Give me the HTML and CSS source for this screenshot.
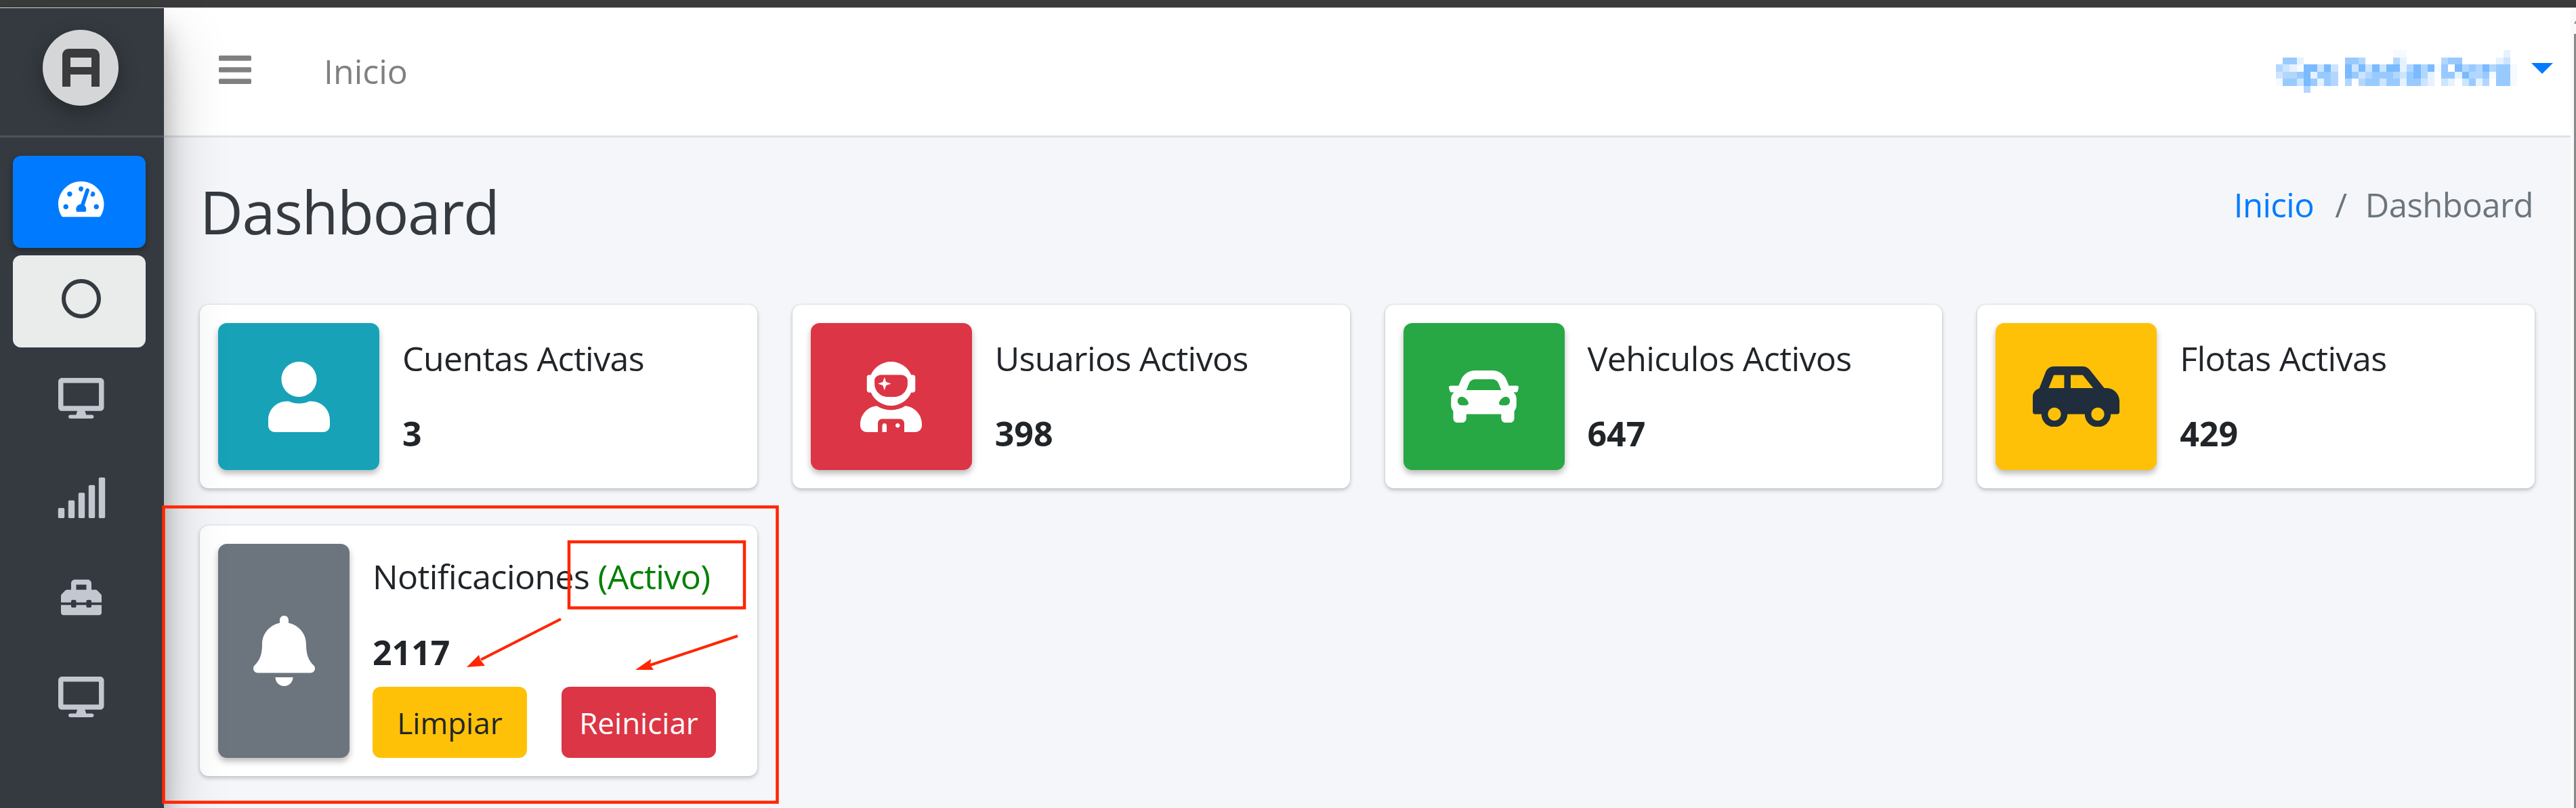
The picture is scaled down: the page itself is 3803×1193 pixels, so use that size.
FILE: index.html
```html
<!DOCTYPE html>
<html>
<head>
    <title>Dashboard</title>
    <link rel="stylesheet" href="styles.css">
</head>
<body>
    <div class="topbar"></div>
    <div class="shell">
        <aside class="sidebar">
            <div class="brand">
                <div class="logo">
                    <svg class="logo-mark" viewBox="0 0 55 56"><path fill-rule="evenodd" d="M10 0h35c6 0 10 4 10 10v46H43V38H12v18H0V10C0 4 4 0 10 0zm2 13v14h31V13z"/></svg>
                </div>
            </div>
            <nav class="side-nav">
                <a class="side-item active">
                    <svg class="ico" viewBox="0 0 576 512"><path d="M288 32C128.94 32 0 160.94 0 320c0 52.8 14.25 102.26 39.06 144.8 5.61 9.62 16.3 15.2 27.44 15.2h443c11.14 0 21.83-5.58 27.44-15.2C561.75 422.26 576 372.8 576 320c0-159.06-128.94-288-288-288zm0 64c14.71 0 26.58 10.13 30.32 23.65-1.11 2.26-2.64 4.23-3.45 6.67l-9.22 27.67c-5.13 3.49-10.97 6.01-17.64 6.01-17.67 0-32-14.33-32-32S270.33 96 288 96zM96 384c-17.67 0-32-14.33-32-32s14.33-32 32-32 32 14.33 32 32-14.33 32-32 32zm48-160c-17.67 0-32-14.33-32-32s14.33-32 32-32 32 14.33 32 32-14.33 32-32 32zm246.77-72.41l-61.33 184C343.13 347.33 352 364.54 352 384c0 11.72-3.38 22.55-8.88 32H232.88c-5.5-9.45-8.88-20.28-8.88-32 0-33.94 26.5-61.43 59.9-63.59l61.34-184.01c4.17-12.56 17.73-19.45 30.36-15.17 12.57 4.19 19.35 17.77 15.17 30.36zm14.66 57.2l15.52-46.55c3.47-1.29 7.13-2.23 11.05-2.23 17.67 0 32 14.33 32 32s-14.33 32-32 32c-11.38-.01-20.89-6.28-26.57-15.22zM480 384c-17.67 0-32-14.33-32-32s14.33-32 32-32 32 14.33 32 32-14.33 32-32 32z"/></svg>
                </a>
                <a class="side-item selected">
                    <svg class="ico-circle" viewBox="0 0 58 58"><circle cx="29" cy="29" r="26" fill="none" stroke="#343a40" stroke-width="6"/></svg>
                </a>
                <a class="side-item">
                    <svg class="ico" viewBox="0 0 576 512"><path d="M528 0H48C21.5 0 0 21.5 0 48v320c0 26.5 21.5 48 48 48h192l-16 48h-72c-13.3 0-24 10.7-24 24s10.7 24 24 24h272c13.3 0 24-10.7 24-24s-10.7-24-24-24h-72l-16-48h192c26.5 0 48-21.5 48-48V48c0-26.5-21.5-48-48-48zm-16 352H64V64h448v288z"/></svg>
                </a>
                <a class="side-item">
                    <svg class="ico" viewBox="0 0 640 512"><path d="M216 288h-48c-8.84 0-16 7.16-16 16v192c0 8.84 7.16 16 16 16h48c8.84 0 16-7.16 16-16V304c0-8.84-7.16-16-16-16zM88 384H40c-8.84 0-16 7.16-16 16v96c0 8.84 7.16 16 16 16h48c8.84 0 16-7.16 16-16v-96c0-8.84-7.16-16-16-16zm256-192h-48c-8.84 0-16 7.16-16 16v288c0 8.84 7.16 16 16 16h48c8.84 0 16-7.16 16-16V208c0-8.84-7.16-16-16-16zm128-96h-48c-8.84 0-16 7.16-16 16v384c0 8.84 7.16 16 16 16h48c8.84 0 16-7.16 16-16V112c0-8.84-7.16-16-16-16zM600 0h-48c-8.84 0-16 7.16-16 16v480c0 8.84 7.16 16 16 16h48c8.84 0 16-7.16 16-16V16c0-8.84-7.16-16-16-16z"/></svg>
                </a>
                <a class="side-item">
                    <svg class="ico" viewBox="0 0 512 512"><path d="M502.63 214.63l-45.25-45.25c-6-6-14.14-9.37-22.63-9.37H384V80c0-26.51-21.49-48-48-48H176c-26.51 0-48 21.49-48 48v80H77.25c-8.49 0-16.62 3.37-22.63 9.37L9.37 214.63c-6 6-9.37 14.14-9.37 22.63V320h128v-16c0-8.84 7.16-16 16-16h32c8.84 0 16 7.16 16 16v16h128v-16c0-8.84 7.16-16 16-16h32c8.84 0 16 7.16 16 16v16h128v-82.75c0-8.48-3.37-16.62-9.37-22.62zM320 160H192V96h128v64zm64 208c0 8.84-7.16 16-16 16h-32c-8.84 0-16-7.16-16-16v-16H192v16c0 8.84-7.16 16-16 16h-32c-8.84 0-16-7.16-16-16v-16H0v96c0 17.67 14.33 32 32 32h448c17.67 0 32-14.33 32-32v-96H384v16z"/></svg>
                </a>
                <a class="side-item">
                    <svg class="ico" viewBox="0 0 576 512"><path d="M528 0H48C21.5 0 0 21.5 0 48v320c0 26.5 21.5 48 48 48h192l-16 48h-72c-13.3 0-24 10.7-24 24s10.7 24 24 24h272c13.3 0 24-10.7 24-24s-10.7-24-24-24h-72l-16-48h192c26.5 0 48-21.5 48-48V48c0-26.5-21.5-48-48-48zm-16 352H64V64h448v288z"/></svg>
                </a>
            </nav>
        </aside>

        <div class="wrapper">
            <header class="navbar">
                <svg class="bars" viewBox="0 60 448 392"><path d="M16 132h416c8.837 0 16-7.163 16-16V76c0-8.837-7.163-16-16-16H16C7.163 60 0 67.163 0 76v40c0 8.837 7.163 16 16 16zm0 160h416c8.837 0 16-7.163 16-16v-40c0-8.837-7.163-16-16-16H16c-8.837 0-16 7.163-16 16v40c0 8.837 7.163 16 16 16zm0 160h416c8.837 0 16-7.163 16-16v-40c0-8.837-7.163-16-16-16H16c-8.837 0-16 7.163-16 16v40c0 8.837 7.163 16 16 16z"/></svg>
                <a class="nav-link">Inicio</a>
                <div class="user-menu">
                    <svg class="blurred-name" viewBox="0 0 35 6" preserveAspectRatio="none" shape-rendering="crispEdges">
                        <path fill-opacity=".04" d="M17 0h2v1h-2zM3 2h1v1H3zM23 2h1v1h-1zM34 2h1v3h-1zM31 3h1v1h-1zM0 4h1v1H0z"/>
                        <path fill-opacity=".1" d="M33 0h1v1h-1zM3 1h1v1H3zM18 1h1v2h-1zM32 1h1v1h-1zM2 2h1v1H2zM5 3h1v1H5zM22 3h1v2h-1zM26 3h1v1h-1zM6 4h1v1H6zM18 4h1v1h-1zM25 4h1v1h-1zM29 4h1v1h-1z"/>
                        <path fill-opacity=".2" d="M33 1h1v1h-1zM1 2h1v1H1zM6 2h1v1H6zM8 2h1v1H8zM11 2h1v1h-1zM13 2h1v1h-1zM15 2h1v1h-1zM0 3h1v1H0zM12 3h1v1h-1zM18 3h1v1h-1zM3 4h1v1H3zM15 4h1v1h-1zM21 4h1v1h-1zM24 4h1v1h-1zM27 4h1v1h-1z"/>
                        <path fill-opacity=".3" d="M12 1h1v1h-1zM17 1h1v1h-1zM24 1h1v1h-1zM0 2h1v1H0zM19 2h1v1h-1zM21 2h1v2h-1zM27 2h1v1h-1zM29 2h1v2h-1zM31 2h1v1h-1zM1 3h2v1H1zM8 3h1v2H8zM13 3h1v1h-1zM17 3h1v1h-1zM28 3h1v1h-1zM10 4h1v1h-1zM12 4h1v1h-1zM30 4h1v1h-1zM4 5h1v1H4z"/>
                        <path fill-opacity=".4" d="M1 1h2v1H1zM10 1h2v1h-2zM25 1h2v1h-2zM24 2h1v1h-1zM28 2h1v1h-1zM32 2h2v3h-2zM3 3h1v1H3zM6 3h2v1H6zM11 3h1v1h-1zM14 3h3v1h-3zM19 3h1v1h-1zM24 3h2v1h-2zM30 3h1v1h-1zM1 4h2v1H1zM5 4h1v1H5zM7 4h1v1H7zM13 4h2v1h-2zM16 4h2v1h-2zM19 4h2v1h-2zM28 4h1v1h-1z"/>
                        <path fill-opacity=".52" d="M4 2h2v1H4zM7 2h1v1H7zM10 2h1v2h-1zM12 2h1v1h-1zM14 2h1v1h-1zM16 2h2v1h-2zM20 2h1v2h-1zM22 2h1v1h-1zM26 2h1v1h-1zM30 2h1v1h-1zM4 3h1v2H4zM27 3h1v1h-1z"/>
                    </svg>
                    <span class="caret"></span>
                </div>
            </header>

            <main class="content">
                <div class="content-head">
                    <h1>Dashboard</h1>
                    <ol class="breadcrumb">
                        <li><a>Inicio</a></li>
                        <li class="sep">/</li>
                        <li class="current">Dashboard</li>
                    </ol>
                </div>

                <div class="boxes">
                    <div class="info-box">
                        <span class="box-icon bg-info">
                            <svg class="icon-lg" viewBox="0 0 448 512"><path d="M224 256c70.7 0 128-57.3 128-128S294.7 0 224 0 96 57.3 96 128s57.3 128 128 128zm89.6 32h-16.7c-22.2 10.2-46.9 16-72.9 16s-50.6-5.8-72.9-16h-16.7C60.2 288 0 348.2 0 422.4V464c0 26.5 21.5 48 48 48h352c26.5 0 48-21.5 48-48v-41.6c0-74.2-60.2-134.4-134.4-134.4z"/></svg>
                        </span>
                        <div class="box-text">
                            <span class="box-title">Cuentas Activas</span>
                            <span class="box-number">3</span>
                        </div>
                    </div>
                    <div class="info-box">
                        <span class="box-icon bg-danger">
                            <svg class="icon-lg" viewBox="0 0 448 512"><path d="M64 224h13.5c24.7 56.5 80.9 96 146.5 96s121.8-39.5 146.5-96H384c8.8 0 16-7.2 16-16v-96c0-8.8-7.2-16-16-16h-13.5C345.8 39.5 289.6 0 224 0S102.2 39.5 77.5 96H64c-8.8 0-16 7.2-16 16v96c0 8.8 7.2 16 16 16zm40-88c0-22.1 21.5-40 48-40h144c26.5 0 48 17.9 48 40v24c0 53-43 96-96 96h-48c-53 0-96-43-96-96v-24zm72 72l12-36 36-12-36-12-12-36-12 36-36 12 36 12 12 36zm151.6 113.4C297.7 340.7 262.2 352 224 352s-73.7-11.3-103.6-30.6C52.9 328.5 0 385 0 454.4v9.6c0 26.5 21.5 48 48 48h80v-64c0-17.7 14.3-32 32-32h128c17.7 0 32 14.3 32 32v64h80c26.5 0 48-21.5 48-48v-9.6c0-69.4-52.9-125.9-120.4-133zM272 448c-8.8 0-16 7.2-16 16s7.2 16 16 16 16-7.2 16-16-7.2-16-16-16zm-96 0c-8.8 0-16 7.2-16 16v48h32v-48c0-8.8-7.2-16-16-16z"/></svg>
                        </span>
                        <div class="box-text">
                            <span class="box-title">Usuarios Activos</span>
                            <span class="box-number">398</span>
                        </div>
                    </div>
                    <div class="info-box">
                        <span class="box-icon bg-success">
                            <svg class="icon-car" viewBox="0 64 512 384"><path d="M499.99 176h-59.87l-16.64-41.6C406.38 91.63 365.57 64 319.5 64h-127c-46.06 0-86.88 27.63-103.99 70.4L71.87 176H12.01C4.2 176-1.53 183.34.37 190.91l6 24C7.7 220.25 12.5 224 18.01 224h20.07C24.65 235.73 16 252.78 16 272v48c0 16.12 6.16 30.67 16 41.93V416c0 17.67 14.33 32 32 32h32c17.67 0 32-14.33 32-32v-32h256v32c0 17.67 14.33 32 32 32h32c17.67 0 32-14.33 32-32v-54.07c9.84-11.25 16-25.8 16-41.93v-48c0-19.22-8.65-36.27-22.07-48H494c5.51 0 10.31-3.75 11.64-9.09l6-24c1.89-7.57-3.84-14.91-11.65-14.91zm-352.06-17.83c7.29-18.22 24.94-30.17 44.57-30.17h127c19.63 0 37.28 11.95 44.57 30.17L384 208H128l19.93-49.83zM96 319.8c-19.2 0-32-12.76-32-31.9S76.8 256 96 256s48 28.71 48 47.85-28.8 15.95-48 15.95zm320 0c-19.2 0-48 3.19-48-15.95S396.8 256 416 256s32 12.76 32 31.9-12.8 31.9-32 31.9z"/></svg>
                        </span>
                        <div class="box-text">
                            <span class="box-title">Vehiculos Activos</span>
                            <span class="box-number">647</span>
                        </div>
                    </div>
                    <div class="info-box">
                        <span class="box-icon bg-warning">
                            <svg class="icon-side" viewBox="0 32 640 448"><path d="M544 192h-16L419.22 56.02A64.025 64.025 0 0 0 369.24 32H155.33c-26.17 0-49.7 15.93-59.42 40.23L48 194.26C20.44 201.4 0 226.21 0 256v112c0 8.84 7.16 16 16 16h48c0 53.02 42.98 96 96 96s96-42.98 96-96h128c0 53.02 42.98 96 96 96s96-42.98 96-96h48c8.84 0 16-7.16 16-16v-80c0-53.02-42.98-96-96-96zM160 432c-26.47 0-48-21.53-48-48s21.53-48 48-48 48 21.53 48 48-21.53 48-48 48zm72-240H116.93l38.4-96H232v96zm48 0V96h89.24l76.8 96H280zm200 240c-26.47 0-48-21.53-48-48s21.53-48 48-48 48 21.53 48 48-21.53 48-48 48z"/></svg>
                        </span>
                        <div class="box-text">
                            <span class="box-title">Flotas Activas</span>
                            <span class="box-number">429</span>
                        </div>
                    </div>

                    <div class="info-box notif">
                        <span class="box-icon bg-secondary">
                            <svg class="icon-lg" viewBox="0 0 448 512"><path d="M224 512c35.32 0 63.97-28.65 63.97-64H160.03c0 35.35 28.65 64 63.97 64zm215.39-149.71c-19.32-20.76-55.47-51.99-55.47-154.29 0-77.7-54.48-139.9-127.94-155.16V32c0-17.67-14.32-32-31.98-32s-31.98 14.33-31.98 32v20.84C118.56 68.1 64.08 130.3 64.08 208c0 102.3-36.15 133.53-55.47 154.29-6 6.45-8.66 14.16-8.61 21.71.11 16.4 12.98 32 32.1 32h383.8c19.12 0 32-15.6 32.1-32 .05-7.55-2.61-15.27-8.61-21.71z"/></svg>
                        </span>
                        <div class="box-text">
                            <span class="box-title">Notificaciones <span class="state-on">(Activo)</span></span>
                            <span class="box-number">2117</span>
                            <div class="box-actions">
                                <button type="button" class="btn btn-warning">Limpiar</button>
                                <button type="button" class="btn btn-danger">Reiniciar</button>
                            </div>
                        </div>
                    </div>
                </div>
            </main>
        </div>

        <div class="scroll-strip">
            <span class="scroll-arrow"></span>
            <span class="scroll-thumb"></span>
        </div>
    </div>

    <!-- red marks drawn over the screenshot -->
    <svg class="marks" viewBox="0 0 3803 1193">
        <rect x="241.5" y="748.5" width="906" height="436" fill="none" stroke="#ff2600" stroke-width="4.5"/>
        <rect x="840" y="800" width="259" height="97.5" fill="none" stroke="#ff2600" stroke-width="4.5"/>
        <line x1="828" y1="914" x2="710" y2="974" stroke="#ff2600" stroke-width="4"/>
        <polygon points="689,985 707,967 709,974 716,983" fill="#ff2600"/>
        <line x1="1089" y1="939" x2="960" y2="982" stroke="#ff2600" stroke-width="4"/>
        <polygon points="938,989 961,973 960,982 965,989" fill="#ff2600"/>
    </svg>
</body>
</html>
```

FILE: styles.css
```css
html, body {
    height: 100%;
}

body {
    margin: 0;
    display: flex;
    flex-direction: column;
    overflow: hidden;
    position: relative;
    font-family: "Open Sans", "Noto Sans", sans-serif;
    background-color: #f4f6f9;
    color: #212529;
}

.topbar {
    height: 11px;
    flex: none;
    background-color: #3b3b3b;
    border-bottom: 1px solid #d9d9d9;
}

.shell {
    flex: 1;
    display: flex;
    min-height: 0;
}

/* sidebar */
.sidebar {
    width: 242px;
    flex: none;
    position: relative;
    z-index: 2;
    background-color: #343a40;
    box-shadow: 0 45px 90px rgba(0, 0, 0, 0.25), 0 32px 32px rgba(0, 0, 0, 0.22);
}

.brand {
    height: 156px;
    padding-left: 63px;
    padding-top: 32px;
    border-bottom: 3px solid #4b545c;
}

.logo {
    width: 112px;
    height: 112px;
    border-radius: 50%;
    background-color: #d5d6d8;
    display: flex;
    align-items: center;
    justify-content: center;
    box-shadow: 0 10px 30px rgba(0, 0, 0, 0.3);
}

.logo-mark {
    width: 55px;
    height: 56px;
    fill: #3a3b3d;
}

.side-nav {
    display: flex;
    flex-direction: column;
    gap: 11px;
    padding: 27px 27px 0 19px;
}

.side-item {
    height: 136px;
    border-radius: 12px;
    display: flex;
    align-items: center;
    justify-content: center;
    padding-left: 6px;
    padding-bottom: 9px;
    box-sizing: border-box;
}

.side-item.active {
    background-color: #007bff;
    box-shadow: 0 4px 10px rgba(0, 0, 0, 0.3);
}

.side-item.selected {
    background-color: #eaecec;
}

.ico {
    height: 60px;
    fill: #c2c7d0;
}

.active .ico {
    fill: #fff;
}

.ico-circle {
    width: 58px;
    height: 58px;
}

/* top navbar */
.wrapper {
    flex: 1;
    min-width: 0;
    display: flex;
    flex-direction: column;
}

.navbar {
    height: 182px;
    flex: none;
    display: flex;
    align-items: center;
    padding: 0 26px 6px 81px;
    background-color: #fff;
    border-bottom: 3px solid #dee2e6;
}

.bars {
    width: 48px;
    height: 42px;
    fill: #808080;
}

.nav-link {
    margin-left: 107px;
    margin-top: 3px;
    font-size: 50px;
    color: #808080;
}

.user-menu {
    margin-left: auto;
    display: flex;
    align-items: center;
    gap: 21px;
}

.blurred-name {
    width: 356px;
    height: 63px;
    margin-top: 5px;
    fill: #007bff;
}

.caret {
    width: 0;
    height: 0;
    margin-bottom: 4px;
    border-left: 16px solid transparent;
    border-right: 16px solid transparent;
    border-top: 16px solid #007bff;
}

/* page content */
.content {
    flex: 1;
    padding: 0 53px;
}

.content-head {
    height: 247px;
    display: flex;
    justify-content: space-between;
    align-items: flex-start;
}

h1 {
    margin: 0;
    padding-top: 57px;
    font-size: 88px;
    font-weight: 400;
    letter-spacing: -1.4px;
    line-height: 1.2;
    color: #343a40;
}

.breadcrumb {
    margin: 0;
    padding: 69px 2px 0 0;
    list-style: none;
    display: flex;
    font-size: 49px;
    letter-spacing: -0.5px;
    line-height: 60px;
}

.breadcrumb a {
    color: #007bff;
}

.breadcrumb .sep {
    padding: 0 27px 0 31px;
    color: #6c757d;
}

.breadcrumb .current {
    color: #6c757d;
}

.boxes {
    display: grid;
    grid-template-columns: repeat(4, 1fr);
    gap: 55px 52px;
}

.info-box {
    height: 271px;
    box-sizing: border-box;
    padding: 27px;
    display: flex;
    background-color: #fff;
    border-radius: 13px;
    box-shadow: 0 0 3px rgba(0, 0, 0, 0.13), 0 3px 6px rgba(0, 0, 0, 0.2);
}

.notif {
    height: 370px;
}

.box-icon {
    width: 238px;
    flex: none;
    border-radius: 13px;
    display: flex;
    align-items: center;
    justify-content: center;
    box-shadow: 0 5px 10px rgba(0, 0, 0, 0.28);
}

.notif .box-icon {
    width: 194px;
}

.bg-info { background-color: #17a2b8; }
.bg-danger { background-color: #dc3545; }
.bg-success { background-color: #28a745; }
.bg-warning { background-color: #ffc107; }
.bg-secondary { background-color: #6c757d; }

.icon-lg {
    height: 104px;
    fill: #fff;
}

.icon-car {
    width: 103px;
    fill: #fff;
}

.icon-side {
    width: 128px;
    fill: #1f2d3d;
}

.box-text {
    flex: 1;
    min-width: 0;
    margin-left: 34px;
    display: flex;
    flex-direction: column;
}

.box-title {
    font-size: 50px;
    letter-spacing: -0.6px;
    line-height: 78px;
    margin-top: 13px;
    white-space: nowrap;
}

.notif .box-title {
    margin-top: 9px;
}

.state-on {
    color: green;
}

.box-number {
    font-size: 50px;
    font-weight: 700;
    line-height: 78px;
    margin-top: 33px;
}

.notif .box-number {
    margin-top: 34px;
}

.box-actions {
    margin-top: auto;
    display: flex;
    gap: 51px;
}

.btn {
    width: 228px;
    height: 105px;
    padding: 0;
    border: none;
    border-radius: 12px;
    font-family: inherit;
    font-size: 44px;
}

.btn-warning {
    background-color: #ffc107;
    color: #212529;
}

.btn-danger {
    background-color: #dc3545;
    color: #fff;
}

/* strip at the right edge */
.scroll-strip {
    width: 8px;
    flex: none;
    background-color: #fafafa;
    display: flex;
    flex-direction: column;
    align-items: flex-end;
}

.scroll-arrow {
    margin-top: 18px;
    width: 0;
    height: 0;
    border-left: 3px solid transparent;
    border-bottom: 5px solid #8a8a8a;
}

.scroll-thumb {
    margin-top: 15px;
    flex: 1;
    width: 3px;
    background-color: #8a8a8a;
}

.marks {
    position: absolute;
    left: 0;
    top: 0;
    width: 3803px;
    height: 1193px;
    z-index: 3;
    pointer-events: none;
}
```
